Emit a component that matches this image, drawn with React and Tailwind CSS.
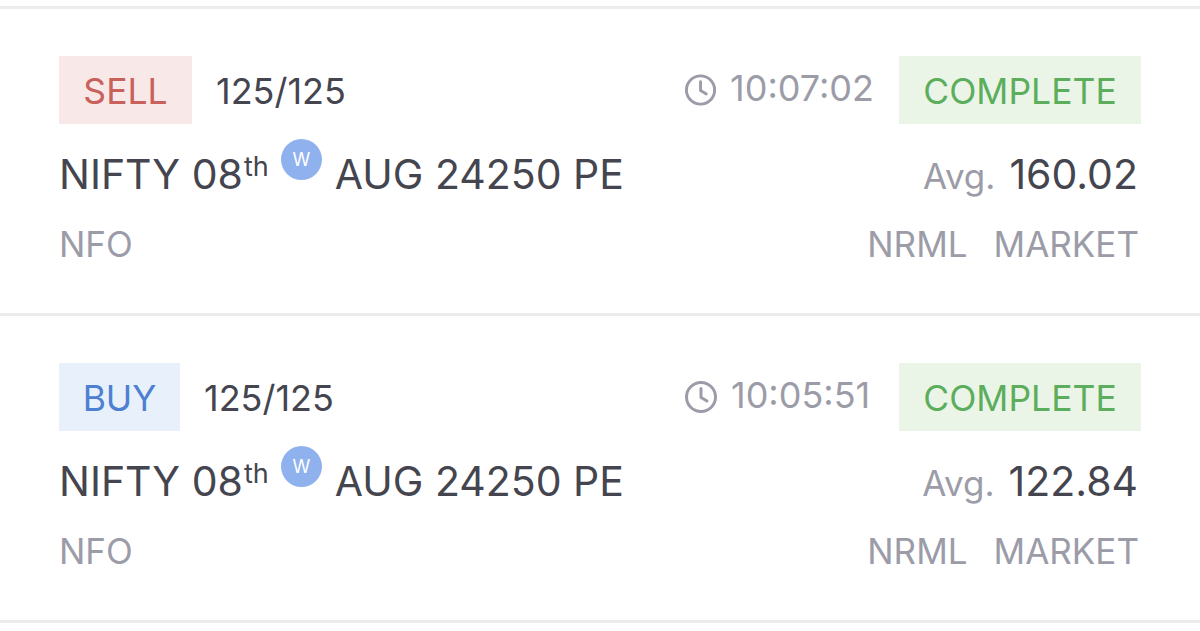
import React from 'react';

const orders = [
  { side: 'SELL', time: '10:07:02', avg: '160.02', badge: 'bg-[#f8e9e8] text-[#c8615c] w-[133px]' },
  { side: 'BUY', time: '10:05:51', avg: '122.84', badge: 'bg-[#e8f0fc] text-[#4d80d0] w-[121px]' },
];

function ClockIcon() {
  return (
    <svg width="34" height="34" viewBox="0 0 34 34" fill="none" stroke="#9b9ca8" strokeWidth="3" strokeLinecap="round" strokeLinejoin="round">
      <circle cx="17" cy="17" r="14.5" />
      <path d="M17 8.5V17.5L23 21" />
    </svg>
  );
}

function OrderRow({ order }) {
  return (
    <div className="h-[307px] border-b-[3px] border-[#ececee] pt-[47px] px-[59px]">
      <div className="flex items-center h-[68px]">
        <span className={`flex items-center justify-center h-[68px] pt-[3px] text-[35.5px] ${order.badge}`}>{order.side}</span>
        <span className="ml-[24px] pt-[2px] text-[36px] text-[#44454f]">125/125</span>
        <div className="ml-auto flex items-center gap-[13px] w-[190px] text-[#9b9ca8] text-[36px]">
          <ClockIcon />
          <span className="-mt-[4px]">{order.time}</span>
        </div>
        <span className="ml-[25px] flex items-center justify-center w-[242px] h-[68px] pt-[3px] bg-[#eaf5e8] text-[#5cad5c] text-[35.5px]">COMPLETE</span>
      </div>
      <div className="flex items-center justify-between mt-[16px] h-[70px]">
        <div className="flex items-center text-[41px] text-[#44454f]">
          <span>NIFTY 08</span>
          <span className="text-[27px] -mt-[16px] ml-[1px]">th</span>
          <span className="ml-[12px] -mt-[32px] pt-[1px] flex items-center justify-center w-[41px] h-[41px] rounded-full bg-[#8fb1ee] text-white text-[18px]">W</span>
          <span className="ml-[13px]">AUG 24250 PE</span>
        </div>
        <div className="flex items-baseline pr-[3px]">
          <span className="text-[35px] text-[#9b9ca8]">Avg.</span>
          <span className="ml-[14px] text-[41px] text-[#44454f]">{order.avg}</span>
        </div>
      </div>
      <div className="flex items-center justify-between mt-[8px] text-[35px] text-[#9b9ca8]">
        <span>NFO</span>
        <div className="flex gap-[26px] pr-[2px]">
          <span>NRML</span>
          <span>MARKET</span>
        </div>
      </div>
    </div>
  );
}

export default function App() {
  return (
    <div className="w-[1200px] h-[631px] overflow-hidden bg-white font-['Inter',sans-serif]">
      <div className="mt-[6px] h-[3px] bg-[#ececee]" />
      {orders.map((order) => (
        <OrderRow key={order.time} order={order} />
      ))}
    </div>
  );
}
